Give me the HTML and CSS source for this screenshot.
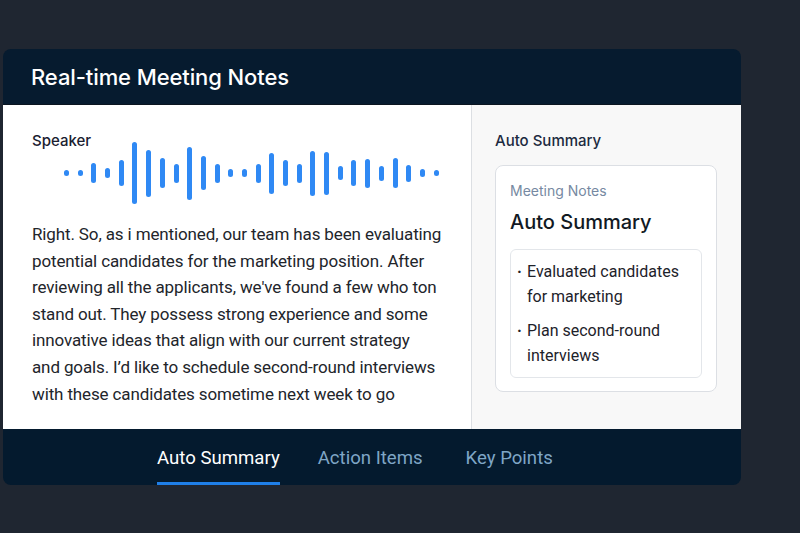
FILE: index.html
```html
<!DOCTYPE html>
<html>
<head>
<meta charset="utf-8">
<link rel="stylesheet" href="styles.css">
</head>
<body>
<div class="card">
  <div class="card-header">
    <h1 class="title">Real-time Meeting Notes</h1>
  </div>
  <div class="card-body">
    <div class="left">
      <div class="speaker">Speaker</div>
      <div class="wave">
        <span class="bar" style="height:6px"></span>
        <span class="bar" style="height:6px"></span>
        <span class="bar" style="height:20px"></span>
        <span class="bar" style="height:10px"></span>
        <span class="bar" style="height:26px"></span>
        <span class="bar" style="height:62px"></span>
        <span class="bar" style="height:47px"></span>
        <span class="bar" style="height:30px"></span>
        <span class="bar" style="height:19px"></span>
        <span class="bar" style="height:53px"></span>
        <span class="bar" style="height:34px"></span>
        <span class="bar" style="height:19px"></span>
        <span class="bar" style="height:8px"></span>
        <span class="bar" style="height:8px"></span>
        <span class="bar" style="height:19px"></span>
        <span class="bar" style="height:41px"></span>
        <span class="bar" style="height:26px"></span>
        <span class="bar" style="height:19px"></span>
        <span class="bar" style="height:45px"></span>
        <span class="bar" style="height:43px"></span>
        <span class="bar" style="height:14px"></span>
        <span class="bar" style="height:26px"></span>
        <span class="bar" style="height:29px"></span>
        <span class="bar" style="height:15px"></span>
        <span class="bar" style="height:30px"></span>
        <span class="bar" style="height:17px"></span>
        <span class="bar" style="height:8px"></span>
        <span class="bar" style="height:6px"></span>
      </div>
      <p class="transcript">Right. So, as i mentioned, our team has been evaluating<br>potential candidates for the marketing position. After<br>reviewing all the applicants, we've found a few who ton<br>stand out. They possess strong experience and some<br>innovative ideas that align with our current strategy<br>and goals. I’d like to schedule second-round interviews<br>with these candidates sometime next week to go</p>
    </div>
    <div class="right">
      <div class="side-label">Auto Summary</div>
      <div class="summary-card">
        <div class="summary-kicker">Meeting Notes</div>
        <div class="summary-title">Auto Summary</div>
        <ul class="summary-list">
          <li><span class="dot">·</span><span>Evaluated candidates<br>for marketing</span></li>
          <li><span class="dot">·</span><span>Plan second-round<br>interviews</span></li>
        </ul>
      </div>
    </div>
  </div>
  <div class="card-footer">
    <div class="tab active">Auto Summary</div>
    <div class="tab">Action Items</div>
    <div class="tab tab-last">Key Points</div>
  </div>
</div>
</body>
</html>
```

FILE: styles.css
```css
* { box-sizing: border-box; }

html, body {
  margin: 0;
  padding: 0;
}

body {
  background: #1f2631;
  width: 800px;
  height: 533px;
  overflow: hidden;
  font-family: Roboto, "Liberation Sans", sans-serif;
}

.card {
  margin: 49px 0 0 3px;
  width: 738px;
  border-radius: 8px;
  overflow: hidden;
  display: flex;
  flex-direction: column;
}

.card-header {
  height: 56px;
  background: #061b2f;
  display: flex;
  align-items: center;
  padding-left: 28px;
  border-bottom: 1px solid #0b1520;
}

.title {
  margin: 0;
  font-family: Inter, "Liberation Sans", sans-serif;
  font-weight: 500;
  font-size: 22px;
  color: #ffffff;
  letter-spacing: -0.1px;
}

.card-body {
  height: 324px;
  display: flex;
  background: #ffffff;
}

.left {
  width: 469px;
  padding: 26px 0 0 29px;
  border-right: 1px solid #dcdfe3;
}

.speaker {
  font-family: Inter, "Liberation Sans", sans-serif;
  font-size: 15px;
  line-height: 20px;
  font-weight: 500;
  color: #1a2030;
}

.wave {
  height: 62px;
  margin-top: -9px;
  margin-left: 32px;
  display: flex;
  align-items: center;
  gap: 8.7px;
}

.bar {
  width: 5px;
  border-radius: 3px;
  background: #2f89f4;
}

.transcript {
  margin: 17px 0 0;
  font-size: 17px;
  line-height: 26.6px;
  letter-spacing: -0.13px;
  color: #22252b;
  white-space: nowrap;
}

.right {
  flex: 1;
  background: #f8f8f8;
  padding: 26px 23px 0 23px;
}

.side-label {
  font-family: Inter, "Liberation Sans", sans-serif;
  font-size: 15px;
  line-height: 20px;
  font-weight: 500;
  color: #1c2a40;
}

.summary-card {
  margin-top: 14px;
  width: 222px;
  background: #ffffff;
  border: 1px solid #dcdfe4;
  border-radius: 8px;
  padding: 16px 14px 13px 14px;
}

.summary-kicker {
  font-family: Inter, "Liberation Sans", sans-serif;
  font-size: 14px;
  line-height: 18px;
  color: #7689a2;
}

.summary-title {
  margin-top: 9px;
  font-family: Inter, "Liberation Sans", sans-serif;
  font-size: 20px;
  line-height: 26px;
  font-weight: 500;
  color: #111923;
}

.summary-list {
  list-style: none;
  margin: 14px 0 0;
  padding: 10px 8px 9px 6px;
  border: 1px solid #e3e6ea;
  border-radius: 6px;
  display: flex;
  flex-direction: column;
  gap: 10px;
  font-size: 16px;
  line-height: 24.5px;
  color: #1d222a;
}

.summary-list li {
  display: flex;
}

.dot {
  width: 10px;
  flex: none;
  font-weight: 700;
}

.card-footer {
  height: 56px;
  background: #041a2e;
  display: flex;
  padding-left: 154px;
  gap: 38px;
}

.tab {
  display: flex;
  align-items: center;
  padding-top: 4px;
  border-bottom: 3px solid transparent;
  font-size: 18.6px;
  color: #7fa6c6;
}

.tab-last {
  margin-left: 5px;
}

.tab.active {
  color: #ffffff;
  border-bottom-color: #1f7fe8;
}
```
